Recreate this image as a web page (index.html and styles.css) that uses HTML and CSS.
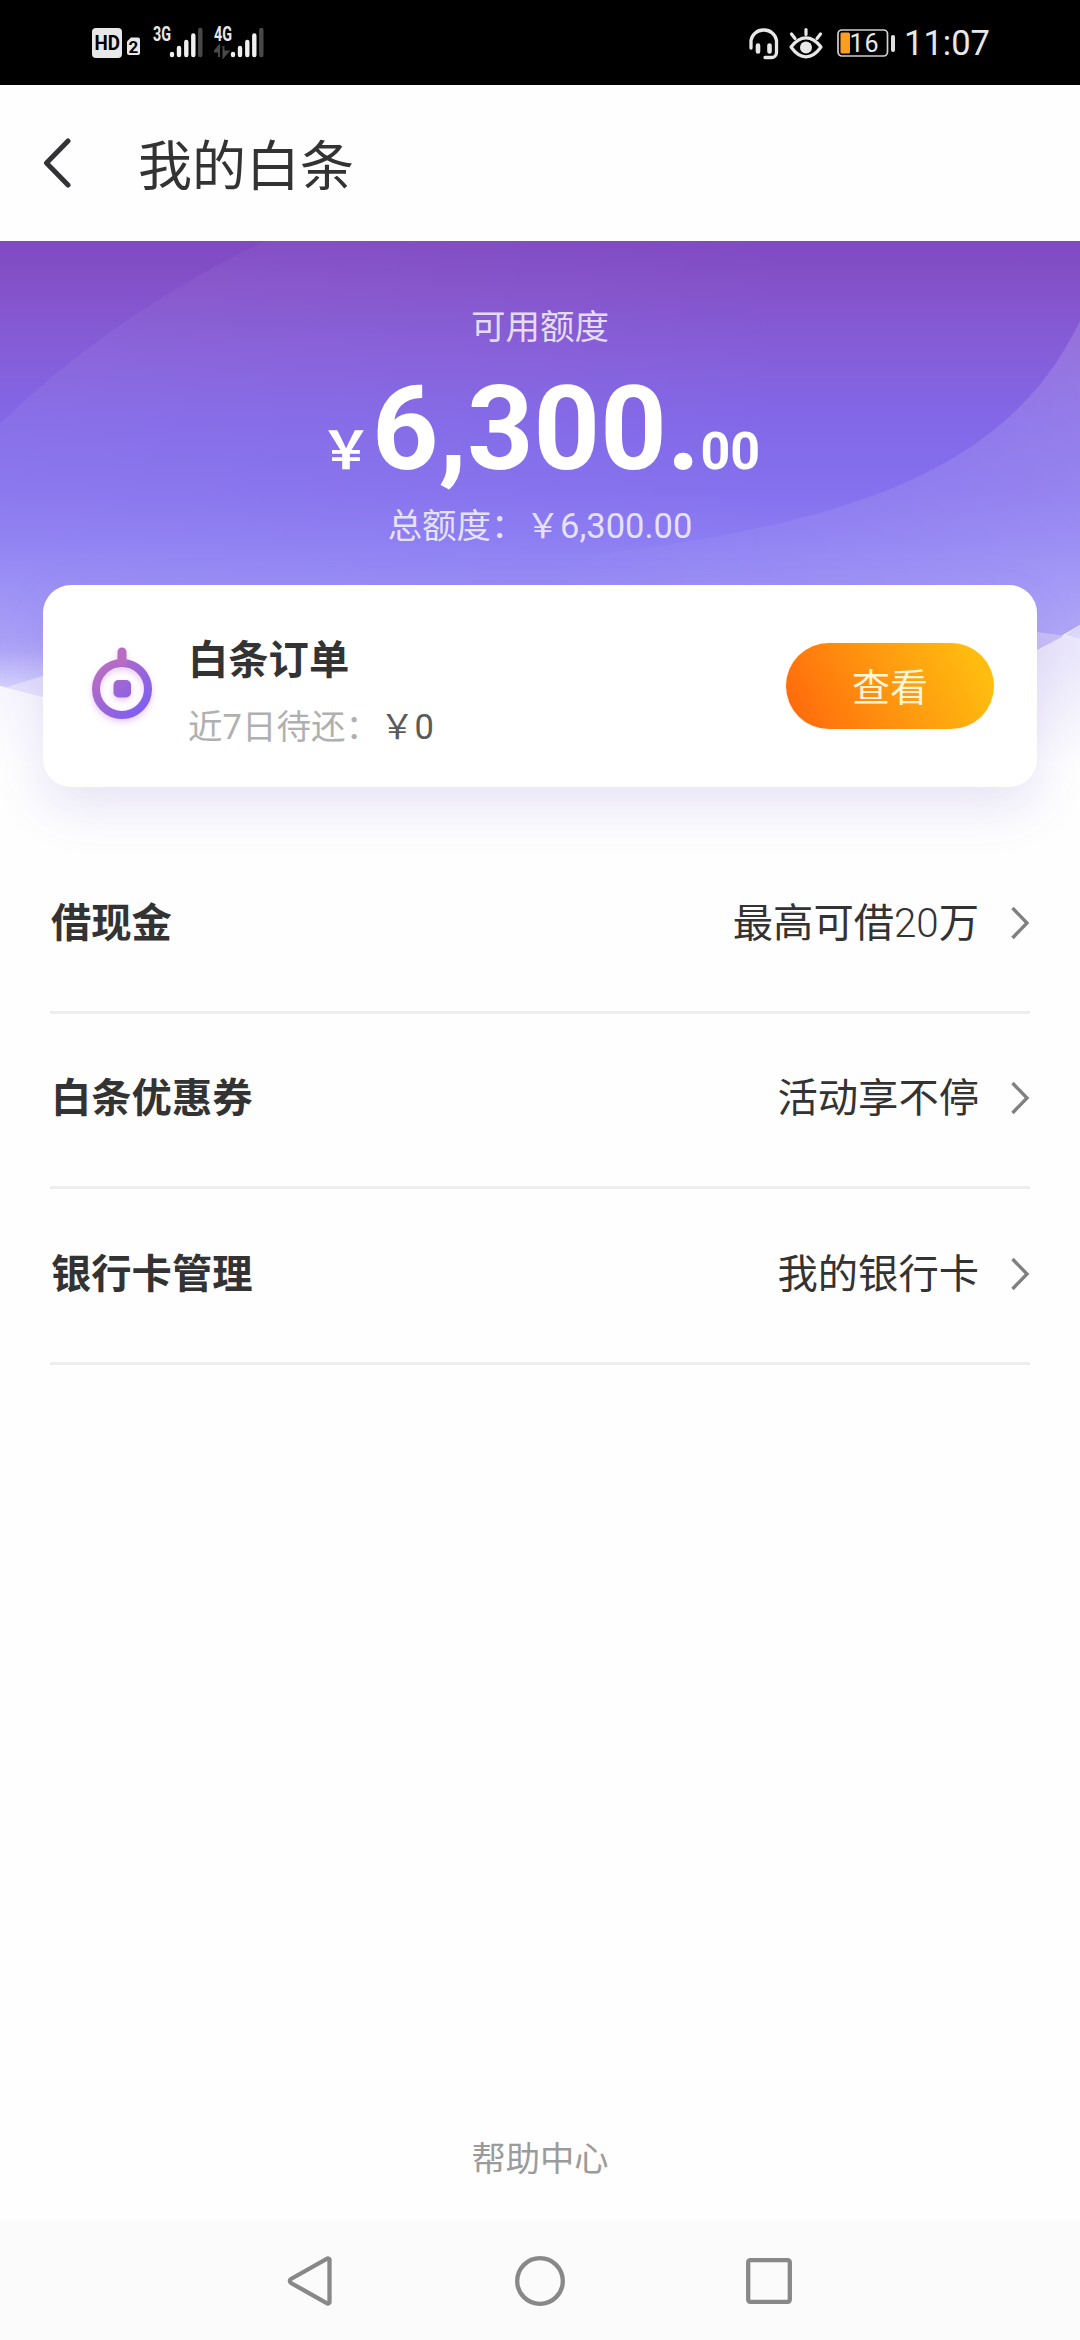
FILE: index.html
```html
<!DOCTYPE html>
<html lang="zh-CN">
<head>
<meta charset="utf-8">
<title>我的白条</title>
<link rel="stylesheet" href="styles.css">
</head>
<body>
<div class="screen">
  <header class="status">
    <div class="status-left">
      <svg class="hd" width="50" height="44" viewBox="0 -5 50 44">
        <rect x="0" y="2" width="30" height="30" rx="4" fill="#e8e8e8"/>
        <text x="2.500" y="24" font-size="20" font-weight="700" textLength="25.500" lengthAdjust="spacingAndGlyphs" fill="#000">HD</text>
        <path d="M39 11.500h7a2 2 0 0 1 2 2v13.500a2 2 0 0 1-2 2H37a2 2 0 0 1-2-2V15.500z" fill="#e8e8e8"/>
        <text x="41.500" y="26.500" font-size="17" font-weight="700" text-anchor="middle" fill="#000">2</text>
      </svg>
      <svg class="signal" width="50" height="44" viewBox="0 -5 50 44">
        <text x="0" y="15" font-size="20" font-weight="700" textLength="18" lengthAdjust="spacingAndGlyphs" fill="#e8e8e8">3G</text>
        <g stroke="#f0f0f0" stroke-width="4.400" stroke-linecap="round">
          <path d="M19 29v-1M26 29v-7M33.300 29V16M40.300 29V9.500"/><path d="M47.300 29V4" stroke="#484848"/>
        </g>
      </svg>
      <svg class="signal" width="50" height="44" viewBox="0 -5 50 44">
        <text x="0" y="15" font-size="20" font-weight="700" textLength="18" lengthAdjust="spacingAndGlyphs" fill="#e8e8e8">4G</text>
        <path d="M5 31V20l-4.500 5.500H5M9.500 20v11l4.500-5.500H9.500" fill="#484848" stroke="#484848" stroke-width="2"/>
        <g stroke="#f0f0f0" stroke-width="4.400" stroke-linecap="round">
          <path d="M19 29v-1M26 29v-7M33.300 29V16M40.300 29V9.500"/><path d="M47.300 29V4" stroke="#484848"/>
        </g>
      </svg>
    </div>
    <div class="status-right">
      <svg width="30" height="34" viewBox="0 0 30 34" fill="none" stroke="#e8e8e8" stroke-linecap="round">
        <path d="M2 22V14.500A12.500 12.500 0 0 1 14.500 4h.500A12.500 12.500 0 0 1 27.500 14.500V26.500a5 5 0 0 1-5 5H16" stroke-width="3.300"/>
        <path d="M9 19.500v6M20.500 19.500v6" stroke-width="4.600"/>
      </svg>
      <svg class="eye" width="34" height="34" viewBox="0 0 34 34" fill="none" stroke="#e8e8e8" stroke-width="3.200" stroke-linecap="round" stroke-linejoin="round">
        <path d="M2 21Q9 11.800 17 11.800T32 21Q25 30.800 17 30.800T2 21z"/>
        <circle cx="17" cy="21.500" r="6" fill="#e8e8e8" stroke="none"/>
        <path d="M17 3.500v5M2.500 8l3.500 4.500M31.500 8l-3.500 4.500"/>
      </svg>
      <svg class="battery" width="59" height="34" viewBox="0 0 59 34">
        <rect x="1" y="4" width="49.500" height="26" rx="4" fill="none" stroke="#d0d0d0" stroke-width="1.700"/>
        <rect x="3.500" y="6.500" width="9.500" height="21" rx="1.500" fill="#fb9e20"/>
        <rect x="54" y="9" width="4" height="17" rx="2" fill="#e0e0e0"/>
        <text x="27" y="25.500" font-size="25" text-anchor="middle" textLength="29" fill="#e8e8e8">16</text>
      </svg>
      <span class="clock">11:07</span>
    </div>
  </header>

  <nav class="titlebar">
    <svg width="28" height="52" viewBox="0 0 28 52"><path d="M25 4 3.500 26 25 48" fill="none" stroke="#333336" stroke-width="5" stroke-linecap="round" stroke-linejoin="round"/></svg>
    <h1>我的白条</h1>
  </nav>

  <section class="hero">
    <svg class="hero-bg" width="1080" height="597" viewBox="0 0 1080 597">
      <defs>
        <linearGradient id="base" gradientUnits="userSpaceOnUse" x1="0" y1="0" x2="0" y2="460">
          <stop offset="0" stop-color="#7f49c2"/><stop offset=".1" stop-color="#8452ca"/>
          <stop offset=".26" stop-color="#855fdb"/><stop offset=".39" stop-color="#8268e7"/>
          <stop offset=".54" stop-color="#8570ed"/><stop offset=".65" stop-color="#8b7cf2"/>
          <stop offset=".76" stop-color="#988cf5"/><stop offset=".86" stop-color="#a59af6"/>
          <stop offset="1" stop-color="#c3bcfc"/>
        </linearGradient>
        <linearGradient id="sheen"><stop offset="0" stop-color="#fff" stop-opacity=".055"/><stop offset=".75" stop-color="#fff" stop-opacity="0"/></linearGradient>
        <linearGradient id="sweep"><stop offset="0" stop-color="#fff" stop-opacity="0"/><stop offset=".35" stop-color="#fff" stop-opacity=".05"/><stop offset="1" stop-color="#fff" stop-opacity=".14"/></linearGradient>
        <linearGradient id="fade" x1="0" y1="0" x2="0" y2="1"><stop offset="0" stop-color="#fefefe" stop-opacity="0"/><stop offset=".6" stop-color="#fefefe"/></linearGradient>
      </defs>
      <path d="M0 0H1080V384L1037 409 540 500 43 456 0 445z" fill="url(#base)"/>
      <path d="M0 183Q110 75 265 0H1080V384L1037 409 540 500 43 456 0 445z" fill="url(#sheen)"/>
      <path d="M1080 80C1010 225 860 288 540 319V500L1037 409 1080 384z" fill="url(#sweep)"/>
      <path d="M0 445 7 446 43 435V456z" fill="#d9d3fb"/>
      <path d="M0 445 43 457V597H0z" fill="#f5f3fd"/>
      <path d="M1037 391 1065 395 1037 409z" fill="#c9c0f6"/>
      <path d="M1065 394 1080 384V398z" fill="#dcd7fc"/>
      <path d="M1037 410 1065 394 1080 398V597H1037z" fill="#ebe7fb"/>
      <rect y="410" width="1080" height="187" fill="url(#fade)"/>
    </svg>
    <div class="hero-content">
      <p class="caption">可用额度</p>
      <p class="amount"><span class="yen">￥</span>6,300.<span class="cents">00</span></p>
      <p class="total">总额度：￥6,300.00</p>
      <div class="card">
        <svg class="card-icon" width="72" height="96" viewBox="0 0 72 96">
          <defs><linearGradient id="ring" gradientUnits="userSpaceOnUse" x1="12" y1="28" x2="58" y2="74"><stop offset="0" stop-color="#bd6fc0"/><stop offset=".5" stop-color="#9c66d6"/><stop offset="1" stop-color="#7f5ff0"/></linearGradient></defs>
          <g fill="none" stroke="url(#ring)">
            <circle cx="36" cy="54" r="26" stroke-width="8"/>
            <path d="M36 17V27" stroke="#b96dc2" stroke-width="9" stroke-linecap="round"/>
          </g>
          <rect x="27.500" y="45" width="17.500" height="17.500" rx="5" fill="url(#ring)"/>
        </svg>
        <div class="card-text">
          <h2>白条订单</h2>
          <p>近7日待还：<span>￥0</span></p>
        </div>
        <button class="view">查看</button>
      </div>
    </div>
  </section>

  <main class="list">
    <div class="row"><strong>借现金</strong><span class="value">最高可借<span class="thin">20</span>万</span><svg class="chev" width="20" height="36" viewBox="0 0 20 36"><path d="M2.500 3 17 18 2.500 33"/></svg></div>
    <div class="row"><strong>白条优惠券</strong><span class="value">活动享不停</span><svg class="chev" width="20" height="36" viewBox="0 0 20 36"><path d="M2.500 3 17 18 2.500 33"/></svg></div>
    <div class="row"><strong>银行卡管理</strong><span class="value">我的银行卡</span><svg class="chev" width="20" height="36" viewBox="0 0 20 36"><path d="M2.500 3 17 18 2.500 33"/></svg></div>
  </main>

  <footer class="help">帮助中心</footer>

  <nav class="sysnav">
    <svg width="54" height="54" viewBox="0 0 54 54"><path d="M45.500 5.500V48.500a1.500 1.500 0 0 1-2 1L7 29a2.300 2.300 0 0 1 0-4L43.500 4.500a1.500 1.500 0 0 1 2 1z"/></svg>
    <svg width="54" height="54" viewBox="0 0 54 54"><circle cx="27" cy="27" r="22.800"/></svg>
    <svg width="54" height="54" viewBox="0 0 54 54"><rect x="6.200" y="6.200" width="41.600" height="41.600" rx="2"/></svg>
  </nav>
</div>
</body>
</html>
```

FILE: styles.css
```css
* { box-sizing: border-box; margin: 0; padding: 0; }

body {
  background: #fefefe;
  color: #333;
  font-family: Roboto, "Noto Sans CJK SC", sans-serif;
}

svg { display: block; flex: none; }

.screen {
  width: 1080px;
  height: 2340px;
  display: flex;
  flex-direction: column;
}

.status {
  height: 85px;
  flex: none;
  background: #000;
  display: flex;
  justify-content: space-between;
  padding: 0 90px 0 92px;
}

.status-left, .status-right { display: flex; align-items: center; }
.signal { margin-left: 11px; }
.eye { margin-left: 10px; }
.battery { margin-left: 14px; }
.clock { margin-left: 8px; width: 86px; font-size: 34.5px; color: #e8e8e8; line-height: 86px; white-space: nowrap; }

.titlebar {
  height: 156px;
  flex: none;
  display: flex;
  align-items: center;
  gap: 67px;
  padding: 0 43px;
  background: #fefefe;
}

.titlebar h1 { font-size: 54px; font-weight: 400; line-height: 80px; margin-top: 10px; }

.hero { position: relative; height: 597px; flex: none; }
.hero-bg { position: absolute; left: 0; top: 0; }

.hero-content {
  position: relative;
  height: 100%;
  display: flex;
  flex-direction: column;
  align-items: center;
  padding: 61px 43px 0;
  text-align: center;
}

.caption, .total { font-size: 34.5px; line-height: 50px; color: rgba(255, 255, 255, .8); }

.amount { height: 134px; line-height: 134px; font-size: 116px; font-weight: 700; color: #fff; margin-top: 10px; white-space: nowrap; }
.yen, .cents { font-size: 52px; }
.total { margin-top: 5px; }

.card {
  margin-top: 34px;
  width: 994px;
  height: 202px;
  display: flex;
  align-items: center;
  background: #fff;
  border-radius: 28px;
  padding: 0 43px;
  text-align: left;
  box-shadow: 0 20px 50px rgba(103, 74, 200, .15);
}

.card-icon { margin-top: -6px; filter: drop-shadow(0 3px 3px rgba(180, 80, 230, .3)); }
.card-text { flex: 1; padding: 11px 0 0 30px; }
.card-text h2 { font-size: 40.3px; line-height: 60px; font-weight: 700; }
.card-text p { font-size: 34.5px; line-height: 50px; margin-top: 11px; font-weight: 400; color: #b0b0b0; }
.card-text p span { color: #5a5a5a; }

.view {
  width: 208px;
  height: 86px;
  margin-top: -1px;
  border: 0;
  border-radius: 43px;
  background: linear-gradient(62deg, #ff6d0c 8%, #ff9a10 52%, #ffc40f 98%);
  box-shadow: 0 0 3px #fff2cc;
  color: #fff6d8;
  font: 400 38px/86px Roboto, "Noto Sans CJK SC", sans-serif;
  padding: 2px 0 0;
}

.list { padding: 0 50px; }
.row { height: 175.5px; display: flex; align-items: center; border-bottom: 3px solid #ededed; padding: 0 0 3px 1px; }
.row strong { flex: 1; font-size: 40.3px; font-weight: 700; margin-top: -7px; }
.value { font-size: 40.3px; margin: -7px 31px 0 0; }
.thin { font-weight: 300; }
.chev { fill: none; stroke: #808080; stroke-width: 3.4; }

.help { margin-top: auto; height: 126px; text-align: center; font-size: 34.3px; line-height: 128px; color: #9b9b9b; }

.sysnav {
  height: 119px;
  flex: none;
  background: #fbfbfb;
  display: flex;
  justify-content: center;
  align-items: center;
  gap: 175px;
}
.sysnav svg { fill: none; stroke: #888; stroke-width: 4.300; }
```
